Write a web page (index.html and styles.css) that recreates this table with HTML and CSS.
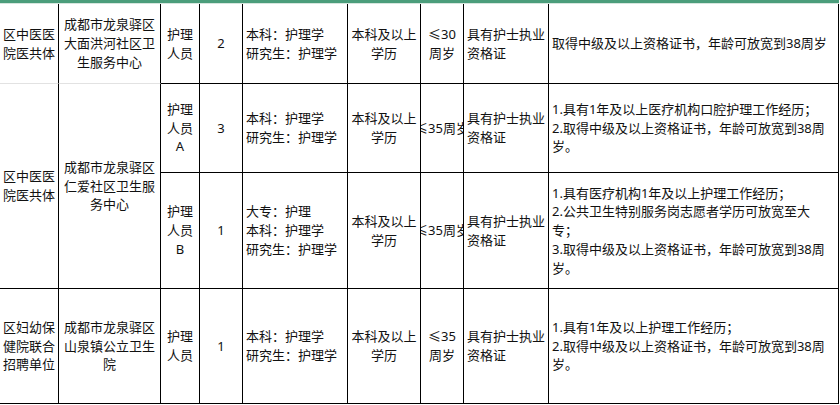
FILE: index.html
```html
<!DOCTYPE html>
<html lang="zh-CN">
<head>
<meta charset="utf-8">
<title>招聘岗位表</title>
<link rel="stylesheet" href="styles.css">
</head>
<body>
<div class="sheet">
  <div class="topbar"></div>
  <table class="grid">
    <colgroup>
      <col class="w-unit"><col class="w-org"><col class="w-post"><col class="w-num"><col class="w-major"><col class="w-edu"><col class="w-age"><col class="w-cert"><col class="w-note">
    </colgroup>
    <tr class="r1">
      <td class="ctr unit soft">区中医医<br>院医共体</td>
      <td class="ctr soft">成都市龙泉驿区<br>大面洪河社区卫<br>生服务中心</td>
      <td class="ctr">护理<br>人员</td>
      <td class="ctr">2</td>
      <td class="lft">本科：护理学<br>研究生：护理学</td>
      <td class="ctr">本科及以上<br>学历</td>
      <td class="ctr">≤30<br>周岁</td>
      <td class="lft">具有护士执业<br>资格证</td>
      <td class="lft">取得中级及以上资格证书，年龄可放宽到38周岁</td>
    </tr>
    <tr class="r2">
      <td class="ctr unit" rowspan="2">区中医医<br>院医共体</td>
      <td class="ctr" rowspan="2">成都市龙泉驿区<br>仁爱社区卫生服<br>务中心</td>
      <td class="ctr">护理<br>人员<br>A</td>
      <td class="ctr">3</td>
      <td class="lft">本科：护理学<br>研究生：护理学</td>
      <td class="ctr">本科及以上<br>学历</td>
      <td class="clip"><div class="clip-in">≤35周岁</div></td>
      <td class="lft">具有护士执业<br>资格证</td>
      <td class="lft">1.具有1年及以上医疗机构口腔护理工作经历；<br>2.取得中级及以上资格证书，年龄可放宽到38周<br>岁。</td>
    </tr>
    <tr class="r3">
      <td class="ctr">护理<br>人员<br>B</td>
      <td class="ctr">1</td>
      <td class="lft">大专：护理<br>本科：护理学<br>研究生：护理学</td>
      <td class="ctr">本科及以上<br>学历</td>
      <td class="clip"><div class="clip-in">≤35周岁</div></td>
      <td class="lft">具有护士执业<br>资格证</td>
      <td class="lft">1.具有医疗机构1年及以上护理工作经历；<br>2.公共卫生特别服务岗志愿者学历可放宽至大<br>专；<br>3.取得中级及以上资格证书，年龄可放宽到38周<br>岁。</td>
    </tr>
    <tr class="r4">
      <td class="ctr unit">区妇幼保<br>健院联合<br>招聘单位</td>
      <td class="ctr">成都市龙泉驿区<br>山泉镇公立卫生<br>院</td>
      <td class="ctr">护理<br>人员</td>
      <td class="ctr">1</td>
      <td class="lft">本科：护理学<br>研究生：护理学</td>
      <td class="ctr">本科及以上<br>学历</td>
      <td class="ctr">≤35<br>周岁</td>
      <td class="lft">具有护士执业<br>资格证</td>
      <td class="lft">1.具有1年及以上护理工作经历；<br>2.取得中级及以上资格证书，年龄可放宽到38周<br>岁。</td>
    </tr>
  </table>
</div>
</body>
</html>
```

FILE: styles.css
```css
html, body {
  margin: 0;
  padding: 0;
  background: #ffffff;
}

body {
  font-family: "Noto Sans", "Noto Sans CJK SC", sans-serif;
  font-size: 13px;
  color: #111111;
}

.sheet {
  width: 839px;
}

.topbar {
  height: 3px;
  background: #4b9d7b;
  border-bottom: 1px solid #d6e6de;
}

.grid {
  border-collapse: separate;
  border-spacing: 0;
  table-layout: fixed;
  width: 839px;
}

.w-unit { width: 59px; }
.w-org { width: 102px; }
.w-post { width: 39px; }
.w-num { width: 43px; }
.w-major { width: 105px; }
.w-edu { width: 73px; }
.w-age { width: 43px; }
.w-cert { width: 85px; }
.w-note { width: 290px; }

.grid td {
  border-right: 1px solid #000000;
  border-bottom: 1px solid #000000;
  padding: 0 3px;
  vertical-align: middle;
  line-height: 18.7px;
  white-space: nowrap;
  overflow: hidden;
}

.grid td.soft {
  border-bottom-color: #e2e2e2;
}

.grid td.unit {
  padding: 0;
}

.ctr { text-align: center; }
.lft { text-align: left; }

.grid td.clip {
  padding: 0;
}

.clip-in {
  display: flex;
  justify-content: center;
  overflow: hidden;
  width: 42px;
  white-space: nowrap;
}

.r1 { height: 80px; }
.r2 { height: 89px; }
.r3 { height: 116px; }
.r4 { height: 115px; }
```
